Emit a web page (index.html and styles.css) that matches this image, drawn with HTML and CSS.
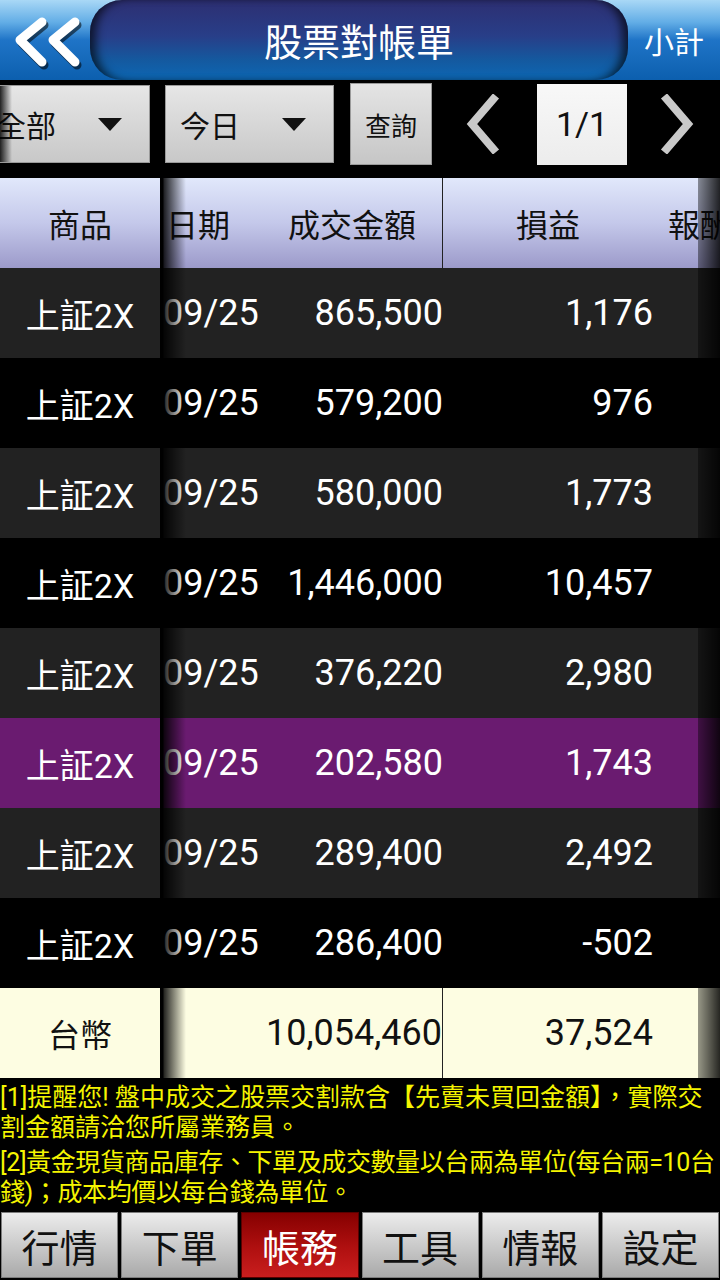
FILE: index.html
```html
<!DOCTYPE html>
<html lang="zh-Hant">
<head>
    <meta charset="UTF-8">
    <meta name="viewport" content="width=device-width, initial-scale=1.0">
    <title>股票對帳單</title>
    <link rel="stylesheet" href="styles.css">
</head>
<body>
    <div class="topbar">
        <div class="back">
            <svg width="80" height="80" viewBox="0 0 80 80">
                <g fill="none" stroke-linecap="round" stroke-linejoin="round" stroke-width="9">
                    <polyline points="37,22 15,40 37,62" stroke="rgba(0,0,0,0.55)" transform="translate(2,3)"/>
                    <polyline points="70,22 48,40 70,62" stroke="rgba(0,0,0,0.55)" transform="translate(2,3)"/>
                    <polyline points="37,22 15,40 37,62" stroke="#fff"/>
                    <polyline points="70,22 48,40 70,62" stroke="#fff"/>
                </g>
            </svg>
        </div>
        <div class="title-pill">股票對帳單</div>
        <div class="subtotal">小計</div>
    </div>

    <div class="filters">
        <div class="dropdown dd-first">
            <span class="dd-text">全部</span>
            <span class="caret"></span>
        </div>
        <div class="dropdown dd-second">
            <span class="dd-text">今日</span>
            <span class="caret"></span>
        </div>
        <div class="query-btn">查詢</div>
        <div class="pager">
            <svg class="arrow" width="36" height="60" viewBox="0 0 36 60">
                <polyline points="30,2 6,30 30,58" fill="none" stroke="#c9c9c9" stroke-width="8"/>
            </svg>
            <div class="page-box">1/1</div>
            <svg class="arrow" width="36" height="60" viewBox="0 0 36 60">
                <polyline points="6,2 30,30 6,58" fill="none" stroke="#c9c9c9" stroke-width="8"/>
            </svg>
        </div>
    </div>

    <div class="table">
        <div class="row head">
            <div class="c-name">商品</div>
            <div class="c-date">日期</div>
            <div class="c-amt">成交金額</div>
            <div class="c-pnl">損益</div>
            <div class="c-ret">報酬率</div>
        </div>
        <div id="rows"></div>
        <div class="row total">
            <div class="c-name">台幣</div>
            <div class="c-date"></div>
            <div class="c-amt">10,054,460</div>
            <div class="c-pnl">37,524</div>
            <div class="c-ret"></div>
        </div>
        <div class="shade-left"></div>
        <div class="shade-right"></div>
    </div>

    <div class="notes">
        <p>[1]提醒您! 盤中成交之股票交割款含【先賣未買回金額】，實際交割金額請洽您所屬業務員。</p>
        <p class="tight">[2]黃金現貨商品庫存、下單及成交數量以台兩為單位(每台兩=10台錢)；成本均價以每台錢為單位。</p>
    </div>

    <div class="tabs">
        <div class="tab">行情</div>
        <div class="tab">下單</div>
        <div class="tab active">帳務</div>
        <div class="tab">工具</div>
        <div class="tab">情報</div>
        <div class="tab">設定</div>
    </div>

    <script>
        // trade rows
        const trades = [
            { amt: '865,500', pnl: '1,176' },
            { amt: '579,200', pnl: '976' },
            { amt: '580,000', pnl: '1,773' },
            { amt: '1,446,000', pnl: '10,457' },
            { amt: '376,220', pnl: '2,980' },
            { amt: '202,580', pnl: '1,743', selected: true },
            { amt: '289,400', pnl: '2,492' },
            { amt: '286,400', pnl: '-502' }
        ];

        const rows = document.getElementById('rows');
        trades.forEach((t, i) => {
            const div = document.createElement('div');
            div.className = 'row ' + (t.selected ? 'selected' : (i % 2 === 0 ? 'odd' : 'even'));
            div.innerHTML = `
                <div class="c-name">上証2X</div>
                <div class="c-date">09/25</div>
                <div class="c-amt">${t.amt}</div>
                <div class="c-pnl">${t.pnl}</div>
                <div class="c-ret"></div>
            `;
            rows.appendChild(div);
        });
    </script>
</body>
</html>
```

FILE: styles.css
```css
/* Base */
body {
    margin: 0;
    padding: 0;
    width: 720px;
    height: 1280px;
    overflow: hidden;
    background: #000;
    color: #fff;
    font-family: Roboto, "Noto Sans CJK TC", sans-serif;
}

/* Top bar */
.topbar {
    display: flex;
    height: 80px;
    background: linear-gradient(#a9d8f6 0%, #62ade6 28%, #1f74c7 50%, #0c5fae 100%);
}

.back {
    width: 90px;
    display: flex;
    align-items: center;
    justify-content: center;
}

.title-pill {
    flex: 1;
    display: flex;
    align-items: center;
    justify-content: center;
    border-radius: 32px;
    background: linear-gradient(#2d2f72 0%, #283e88 45%, #14599f 75%, #0d67b4 100%);
    box-shadow: inset 10px 0 10px -4px rgba(0, 0, 0, 0.65), inset -10px 0 10px -4px rgba(0, 0, 0, 0.65);
    font-size: 38px;
    color: #fff;
    padding-bottom: 2px;
}

.subtotal {
    width: 92px;
    display: flex;
    align-items: center;
    justify-content: center;
    font-size: 30px;
    color: #fff;
}

/* Filter bar */
.filters {
    display: flex;
    align-items: center;
    height: 98px;
    padding-bottom: 10px;
    box-sizing: border-box;
}

.dropdown {
    position: relative;
    height: 78px;
    display: flex;
    align-items: center;
    background: linear-gradient(#e6e6e6, #c8c8c8);
    border: 1px solid #9a9a9a;
    box-sizing: border-box;
    color: #111;
    font-size: 30px;
    overflow: hidden;
}

.dd-first {
    width: 150px;
    border-left: none;
}

.dd-first::before {
    content: '';
    position: absolute;
    left: 0;
    top: 0;
    bottom: 0;
    width: 12px;
    background: linear-gradient(to right, rgba(0, 0, 0, 0.85), rgba(0, 0, 0, 0));
}

.dd-first .dd-text {
    margin-left: -4px;
}

.dd-second {
    width: 169px;
    margin-left: 15px;
}

.dd-second .dd-text {
    margin-left: 14px;
}

.caret {
    margin-left: auto;
    margin-right: 27px;
    width: 0;
    height: 0;
    border-left: 12px solid transparent;
    border-right: 12px solid transparent;
    border-top: 13px solid #111;
}

.query-btn {
    width: 82px;
    height: 82px;
    margin-left: 16px;
    display: flex;
    align-items: center;
    justify-content: center;
    background: linear-gradient(#e4e4e4, #c6c6c6);
    border: 1px solid #9a9a9a;
    box-sizing: border-box;
    color: #111;
    font-size: 26px;
}

.pager {
    display: flex;
    align-items: center;
    margin-left: 34px;
}

.arrow {
    display: block;
}

.page-box {
    width: 90px;
    height: 81px;
    margin: 0 31px 0 35px;
    display: flex;
    align-items: center;
    justify-content: center;
    background: linear-gradient(#f8f8f8, #ececec);
    color: #111;
    font-size: 34px;
}

/* Table */
.table {
    position: relative;
    overflow: hidden;
}

.row {
    display: flex;
    height: 90px;
    font-size: 36px;
    white-space: nowrap;
}

.row > div {
    display: flex;
    align-items: center;
    box-sizing: border-box;
}

.c-name {
    width: 160px;
    justify-content: center;
    font-size: 34px;
}

.c-date {
    width: 102px;
    padding-left: 3px;
}

.c-amt {
    width: 181px;
    justify-content: flex-end;
}

.c-pnl {
    width: 210px;
    justify-content: flex-end;
}

.c-ret {
    flex: 1;
    overflow: hidden;
}

.row.head {
    background: linear-gradient(#e1e8fb, #c4c8ea 50%, #9c9aca);
    color: #111;
    font-size: 32px;
}

.row.head .c-name {
    font-size: 32px;
}

.row.head .c-date {
    padding-left: 6px;
}

.row.head .c-amt,
.row.head .c-pnl {
    justify-content: center;
}

.row.head .c-amt,
.row.total .c-amt {
    border-right: 1px solid #222;
}

.row.head .c-ret {
    padding-left: 15px;
}

.row.odd {
    background: #222;
}

.row.even {
    background: #000;
}

.row.selected {
    background: #6a1b70;
}

.row.total {
    background: #fdfde2;
    color: #111;
}

.row.total .c-name {
    font-size: 32px;
}

.shade-left {
    position: absolute;
    left: 160px;
    top: 0;
    bottom: 0;
    width: 26px;
    background: linear-gradient(to right, #000 0, #000 3px, rgba(0, 0, 0, 0.85) 4px, rgba(0, 0, 0, 0) 26px);
}

.shade-right {
    position: absolute;
    right: 0;
    top: 0;
    bottom: 0;
    width: 22px;
    background: linear-gradient(to right, rgba(0, 0, 0, 0.4), rgba(0, 0, 0, 0.85));
}

/* Notes */
.notes {
    height: 132px;
    padding-top: 5px;
    box-sizing: border-box;
    color: #f5f500;
    font-size: 25px;
    line-height: 30px;
}

.notes p {
    margin: 0 0 5px;
}

.notes .tight {
    letter-spacing: -0.4px;
}

/* Bottom tabs */
.tabs {
    display: flex;
    gap: 3px;
    padding: 2px 1px 0;
}

.tab {
    flex: 1;
    height: 66px;
    display: flex;
    align-items: center;
    justify-content: center;
    background: linear-gradient(#ececec, #c4c4c4 60%, #a9a9a9);
    border: 1px solid #7c7c7c;
    box-sizing: border-box;
    color: #111;
    font-size: 38px;
}

.tab.active {
    background: linear-gradient(#860000, #b01010 55%, #c91e1e);
    border-color: #5a0000;
    color: #fff;
}
```
